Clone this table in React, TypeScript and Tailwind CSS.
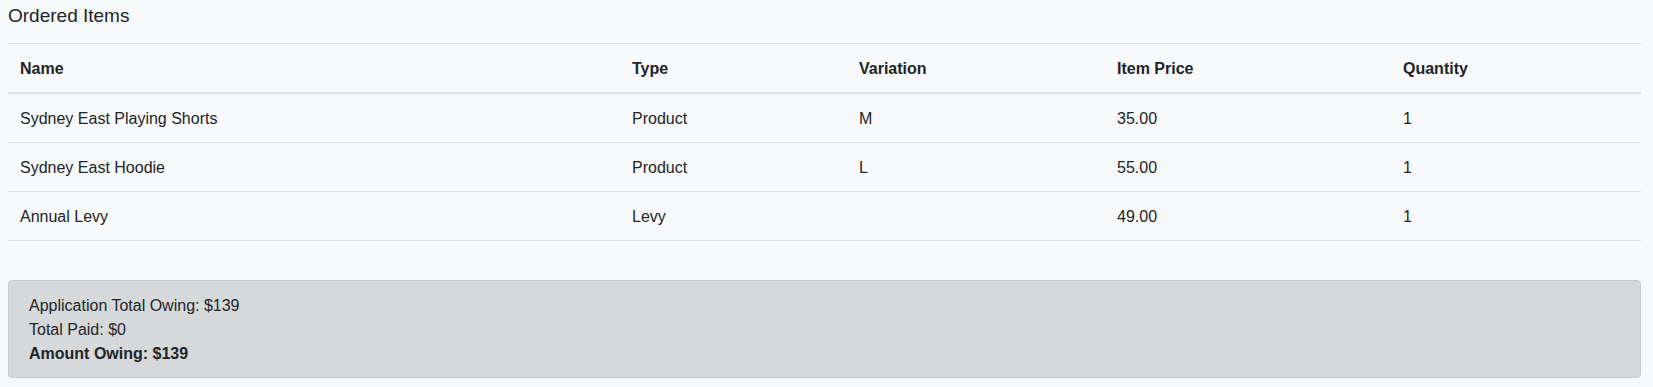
const items = [
  { name: "Sydney East Playing Shorts", type: "Product", variation: "M", price: "35.00", qty: 1 },
  { name: "Sydney East Hoodie", type: "Product", variation: "L", price: "55.00", qty: 1 },
  { name: "Annual Levy", type: "Levy", variation: "", price: "49.00", qty: 1 },
];

const App = () => {
  return (
    <div
      className="min-h-screen bg-[#f8f9fa] pl-2 pr-3 text-[#212529]"
      style={{ fontFamily: '"Liberation Sans", Arial, sans-serif' }}
    >
      {/* Titulo */}
      <h5 className="pt-1 text-[19px] leading-[23px] font-normal mb-[16px]">Ordered Items</h5>

      <table className="w-full table-fixed border-collapse text-base leading-6">
        <thead>
          <tr className="border-t border-[#dee2e6] border-b-2">
            <th className="w-[612px] px-3 pt-[13px] pb-[11px] text-left font-bold">Name</th>
            <th className="w-[227px] px-3 pt-[13px] pb-[11px] text-left font-bold">Type</th>
            <th className="w-[258px] px-3 pt-[13px] pb-[11px] text-left font-bold">Variation</th>
            <th className="w-[286px] px-3 pt-[13px] pb-[11px] text-left font-bold">Item Price</th>
            <th className="px-3 pt-[13px] pb-[11px] text-left font-bold">Quantity</th>
          </tr>
        </thead>
        <tbody>
          {items.map((item) => (
            <tr key={item.name} className="border-b border-[#dee2e6]">
              <td className="px-3 pt-[13px] pb-[11px]">{item.name}</td>
              <td className="px-3 pt-[13px] pb-[11px]">{item.type}</td>
              <td className="px-3 pt-[13px] pb-[11px]">{item.variation}</td>
              <td className="px-3 pt-[13px] pb-[11px]">{item.price}</td>
              <td className="px-3 pt-[13px] pb-[11px]">{item.qty}</td>
            </tr>
          ))}
        </tbody>
      </table>

      {/* Resumo */}
      <div className="mt-[39px] rounded border border-[#c8cacc] bg-[#d6d8d9] px-5 pt-[13px] pb-[11px] text-base leading-6">
        <div>Application Total Owing: $139</div>
        <div>Total Paid: $0</div>
        <div className="font-bold">Amount Owing: $139</div>
      </div>
    </div>
  );
};

export default App;
